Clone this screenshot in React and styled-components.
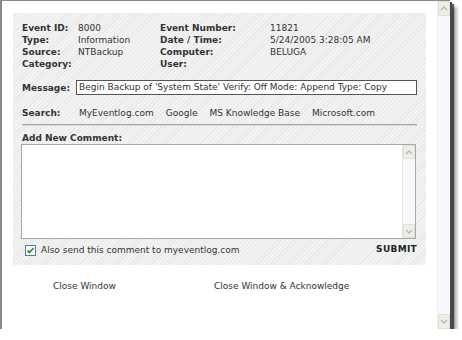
import React from "react";
import styled, { createGlobalStyle } from "styled-components";

const Global = createGlobalStyle`
  html, body { margin: 0; padding: 0; background: #fff; }
  body { font-family: "DejaVu Sans", Verdana, sans-serif; font-size: 9px; color: #333; }
`;

const Window = styled.div`
  width: 448px;
  height: 328px;
  border-left: 2px solid #8a8a8a;
  border-top: 1px solid #8a8a8a;
  box-shadow: 2px 2px 0 #4a4a4a, 4px 4px 1px rgba(0,0,0,0.6), 7px 7px 3px rgba(0,0,0,0.3);
  display: flex;
  background: #fff;
`;

const Content = styled.div`
  flex: 1;
  padding: 12px 11px 0 11px;
  display: flex;
  flex-direction: column;
`;

const ScrollTrack = styled.div`
  width: ${p => p.$w || 14}px;
  background: #f7f8fc;
  display: flex;
  flex-direction: column;
  justify-content: space-between;
  border-left: 1px solid ${p => p.$edge || "#eef0f6"};
`;

const ArrowBtn = styled.div`
  height: ${p => p.$h || 15}px;
  background: #eeeee6;
  border: 1px solid #e0e0d6;
  box-sizing: border-box;
  display: flex;
  align-items: center;
  justify-content: center;
`;

const Panel = styled.div`
  background-color: #efefef;
  background-image: repeating-linear-gradient(
    135deg,
    #f3f3f3 0px,
    #f3f3f3 2px,
    #e8e8e8 2px,
    #e8e8e8 3px
  );
  padding: 9px 9px 9px 9px;
  display: flex;
  flex-direction: column;
`;

const InfoGrid = styled.div`
  display: grid;
  grid-template-columns: 56px 82px 110px 1fr;
  line-height: 12px;
`;

const Label = styled.span`
  font-weight: bold;
  color: #333;
  white-space: nowrap;
`;

const Value = styled.span`
  color: #333;
  white-space: nowrap;
`;

const Row = styled.div`
  display: flex;
  align-items: center;
  line-height: 12px;
  margin-top: ${p => p.$mt || 0}px;
`;

const RowLabel = styled(Label)`
  width: ${p => p.$w || 56}px;
  flex: none;
`;

const MessageBox = styled.div`
  width: 341px;
  height: 15px;
  box-sizing: border-box;
  border: 1px solid #555;
  background: #fff;
  padding: 0 2px;
  line-height: 13px;
  white-space: nowrap;
  overflow: hidden;
`;

const Links = styled.div`
  display: flex;
  gap: 12px;
  padding-left: 1px;
`;

const Link = styled.a`
  color: #333;
  text-decoration: none;
  white-space: nowrap;
`;

const Rule = styled.div`
  height: 1px;
  background: #a8a8a8;
  border-bottom: 1px solid #d8d8d8;
  margin: 5px 0 0 0;
`;

const SectionTitle = styled(Label)`
  display: block;
  line-height: 12px;
  margin-top: 6px;
`;

const CommentBox = styled.div`
  height: 95px;
  box-sizing: border-box;
  border: 1px solid #a8a8a8;
  background: #fff;
  margin: 0 1px 0 -1px;
  display: flex;
  justify-content: flex-end;
`;

const Footer = styled.div`
  display: flex;
  align-items: center;
  justify-content: space-between;
  margin-top: 5px;
  padding-left: 3px;
  line-height: 12px;
`;

const Check = styled.span`
  display: flex;
  align-items: center;
  gap: 5px;
`;

const Submit = styled.span`
  font-weight: bold;
  color: #222;
  letter-spacing: 0.3px;
  margin-top: -3px;
`;

const Actions = styled.div`
  display: grid;
  grid-template-columns: 161px 1fr;
  padding-left: 40px;
  margin-top: 15px;
  line-height: 12px;
`;

const Chevron = ({ up }) => (
  <svg width="8" height="5" viewBox="0 0 8 5">
    <path
      d={up ? "M1 4 L4 1 L7 4" : "M1 1 L4 4 L7 1"}
      fill="none"
      stroke="#b8b8ae"
      strokeWidth="1.3"
    />
  </svg>
);

const CheckIcon = () => (
  <svg width="11" height="11" viewBox="0 0 11 11">
    <rect x="0.5" y="0.5" width="10" height="10" fill="#fff" stroke="#5b7a9a" />
    <path d="M2.5 5.5 L4.5 7.5 L8.5 3" fill="none" stroke="#1f9a1f" strokeWidth="1.8" />
  </svg>
);

export default function App() {
  return (
    <>
      <Global />
      <Window>
        <Content>
          <Panel>
            <InfoGrid>
              <Label>Event ID:</Label>
              <Value>8000</Value>
              <Label>Event Number:</Label>
              <Value>11821</Value>
              <Label>Type:</Label>
              <Value>Information</Value>
              <Label>Date / Time:</Label>
              <Value>5/24/2005 3:28:05 AM</Value>
              <Label>Source:</Label>
              <Value>NTBackup</Value>
              <Label>Computer:</Label>
              <Value>BELUGA</Value>
              <Label>Category:</Label>
              <Value></Value>
              <Label>User:</Label>
              <Value></Value>
            </InfoGrid>
            <Row $mt={10}>
              <RowLabel $w={54}>Message:</RowLabel>
              <MessageBox>Begin Backup of 'System State' Verify: Off Mode: Append Type: Copy</MessageBox>
            </Row>
            <Row $mt={12}>
              <RowLabel $w={56}>Search:</RowLabel>
              <Links>
                <Link>MyEventlog.com</Link>
                <Link>Google</Link>
                <Link>MS Knowledge Base</Link>
                <Link>Microsoft.com</Link>
              </Links>
            </Row>
            <Rule />
            <SectionTitle>Add New Comment:</SectionTitle>
            <CommentBox>
              <ScrollTrack $w={12} $edge="#e4e4ea">
                <ArrowBtn $h={14}><Chevron up /></ArrowBtn>
                <ArrowBtn $h={14}><Chevron /></ArrowBtn>
              </ScrollTrack>
            </CommentBox>
            <Footer>
              <Check>
                <CheckIcon />
                <span>Also send this comment to myeventlog.com</span>
              </Check>
              <Submit>SUBMIT</Submit>
            </Footer>
          </Panel>
          <Actions>
            <Link>Close Window</Link>
            <Link>Close Window &amp; Acknowledge</Link>
          </Actions>
        </Content>
        <ScrollTrack>
          <ArrowBtn><Chevron up /></ArrowBtn>
          <ArrowBtn><Chevron /></ArrowBtn>
        </ScrollTrack>
      </Window>
    </>
  );
}
